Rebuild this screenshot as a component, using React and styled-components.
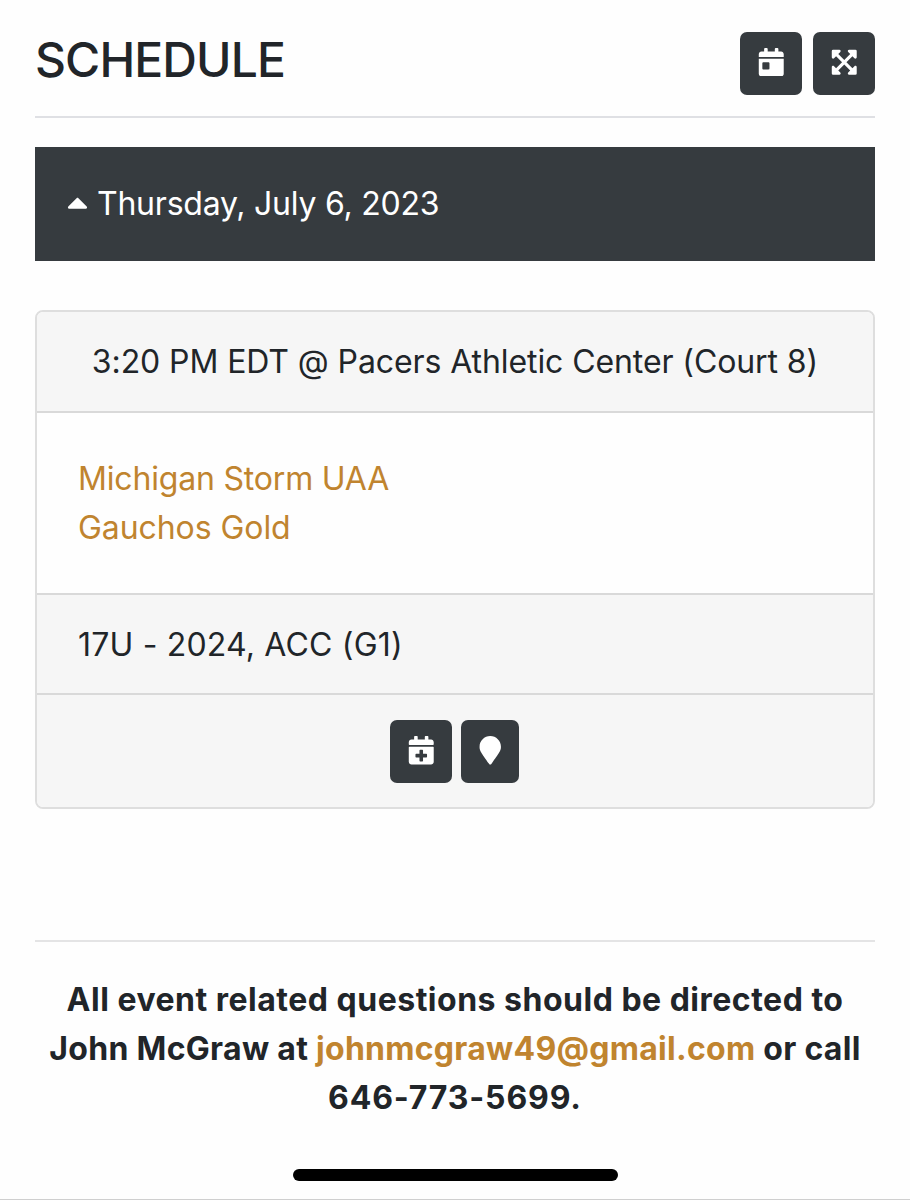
import React from "react";
import styled, { createGlobalStyle } from "styled-components";
import {
  FaCalendarDay,
  FaExpandArrowsAlt,
  FaCalendarPlus,
  FaMapMarker,
  FaCaretUp,
} from "react-icons/fa";

const GlobalStyle = createGlobalStyle`
  *, *::before, *::after { box-sizing: border-box; }
  body {
    margin: 0;
    background: #fefefe;
    color: #212529;
    font-family: Inter, "Liberation Sans", sans-serif;
    font-size: 32px;
    line-height: 49px;
  }
`;

const Page = styled.main`
  display: flex;
  flex-direction: column;
  height: 1200px;
  padding: 32px 35px 0;
  border-bottom: 1px solid #cfcfcf;
  overflow: hidden;
`;

const Header = styled.header`
  display: flex;
  align-items: flex-start;
  justify-content: space-between;
  height: 86px;
  border-bottom: 2px solid #dfe0e4;
`;

const Title = styled.h1`
  margin: 0;
  font-size: 48px;
  line-height: 55px;
  font-weight: 450;
  letter-spacing: -0.9px;
`;

const ButtonGroup = styled.div`
  display: flex;
  gap: ${(p) => p.$gap}px;
`;

const IconButton = styled.button`
  display: flex;
  align-items: center;
  justify-content: center;
  width: ${(p) => p.$width || 62}px;
  height: 63px;
  padding: 0 0 ${(p) => p.$lift || 0}px;
  border: 0;
  border-radius: 7px;
  background: #363b3f;
  color: #fff;
  font-size: 28.5px;
`;

const DayBanner = styled.section`
  display: flex;
  align-items: center;
  height: 114px;
  margin-top: 29px;
  padding: 0 32px 2px;
  background: #363b3f;
  color: #fff;
`;

const Caret = styled(FaCaretUp)`
  width: 21px;
  height: 33px;
  margin: 0 9px 2px 0;
`;

const DayLabel = styled.span`
  letter-spacing: -0.23px;
`;

const Card = styled.article`
  display: flex;
  flex-direction: column;
  height: 499px;
  margin-top: 49px;
  border: 2px solid #dedede;
  border-radius: 8px;
  overflow: hidden;
`;

const CardRow = styled.div`
  display: flex;
  align-items: center;
  justify-content: ${(p) => (p.$center ? "center" : "flex-start")};
  height: ${(p) => p.$height}px;
  padding: 0 41px;
  background: #f6f6f6;
  border-bottom: 2px solid #d9d9d9;
  white-space: nowrap;
  letter-spacing: ${(p) => p.$tracking || 0}px;

  &:last-child {
    padding-right: 42px;
    border-bottom: 0;
  }
`;

const Teams = styled.div`
  display: flex;
  flex-direction: column;
  justify-content: center;
  align-items: flex-start;
  height: 182px;
  padding: 0 41px;
  border-bottom: 2px solid #d9d9d9;
`;

const Link = styled.a`
  color: #c0842f;
  text-decoration: none;
  letter-spacing: ${(p) => p.$tracking || 0}px;
`;

const Footer = styled.footer`
  margin-top: 131px;
  padding-top: 33px;
  border-top: 2px solid #e4e4e5;
  text-align: center;
  font-weight: 700;
`;

const FooterLine = styled.div`
  white-space: nowrap;
  letter-spacing: ${(p) => p.$tracking || 0}px;
`;

const HomeIndicator = styled.div`
  align-self: center;
  width: 325px;
  height: 12px;
  margin-top: 47px;
  border-radius: 6px;
  background: #000;
`;

export default function App() {
  return (
    <>
      <GlobalStyle />
      <Page>
        <Header>
          <Title>SCHEDULE</Title>
          <ButtonGroup $gap={11}>
            <IconButton $lift={3} aria-label="Jump to day"><FaCalendarDay /></IconButton>
            <IconButton $lift={3} aria-label="Expand all"><FaExpandArrowsAlt /></IconButton>
          </ButtonGroup>
        </Header>

        <DayBanner>
          <Caret />
          <DayLabel>Thursday, July 6, 2023</DayLabel>
        </DayBanner>

        <Card>
          <CardRow $height={101} $center $tracking={-0.09}>
            3:20 PM EDT @ Pacers Athletic Center (Court 8)
          </CardRow>
          <Teams>
            <Link $tracking={-0.18}>Michigan Storm UAA</Link>
            <Link $tracking={-0.07}>Gauchos Gold</Link>
          </Teams>
          <CardRow $height={100} $tracking={0.18}>17U - 2024, ACC (G1)</CardRow>
          <CardRow $height={112} $center>
            <ButtonGroup $gap={9}>
              <IconButton $lift={1} aria-label="Add to calendar"><FaCalendarPlus /></IconButton>
              <IconButton $lift={1} $width={58} aria-label="Show location"><FaMapMarker /></IconButton>
            </ButtonGroup>
          </CardRow>
        </Card>

        <Footer>
          <FooterLine $tracking={0.5}>All event related questions should be directed to</FooterLine>
          <FooterLine $tracking={0.3}>
            John McGraw at <Link $tracking={0.27}>johnmcgraw49@gmail.com</Link> or call
          </FooterLine>
          <FooterLine $tracking={0.85}>646-773-5699.</FooterLine>
        </Footer>
        <HomeIndicator />
      </Page>
    </>
  );
}
